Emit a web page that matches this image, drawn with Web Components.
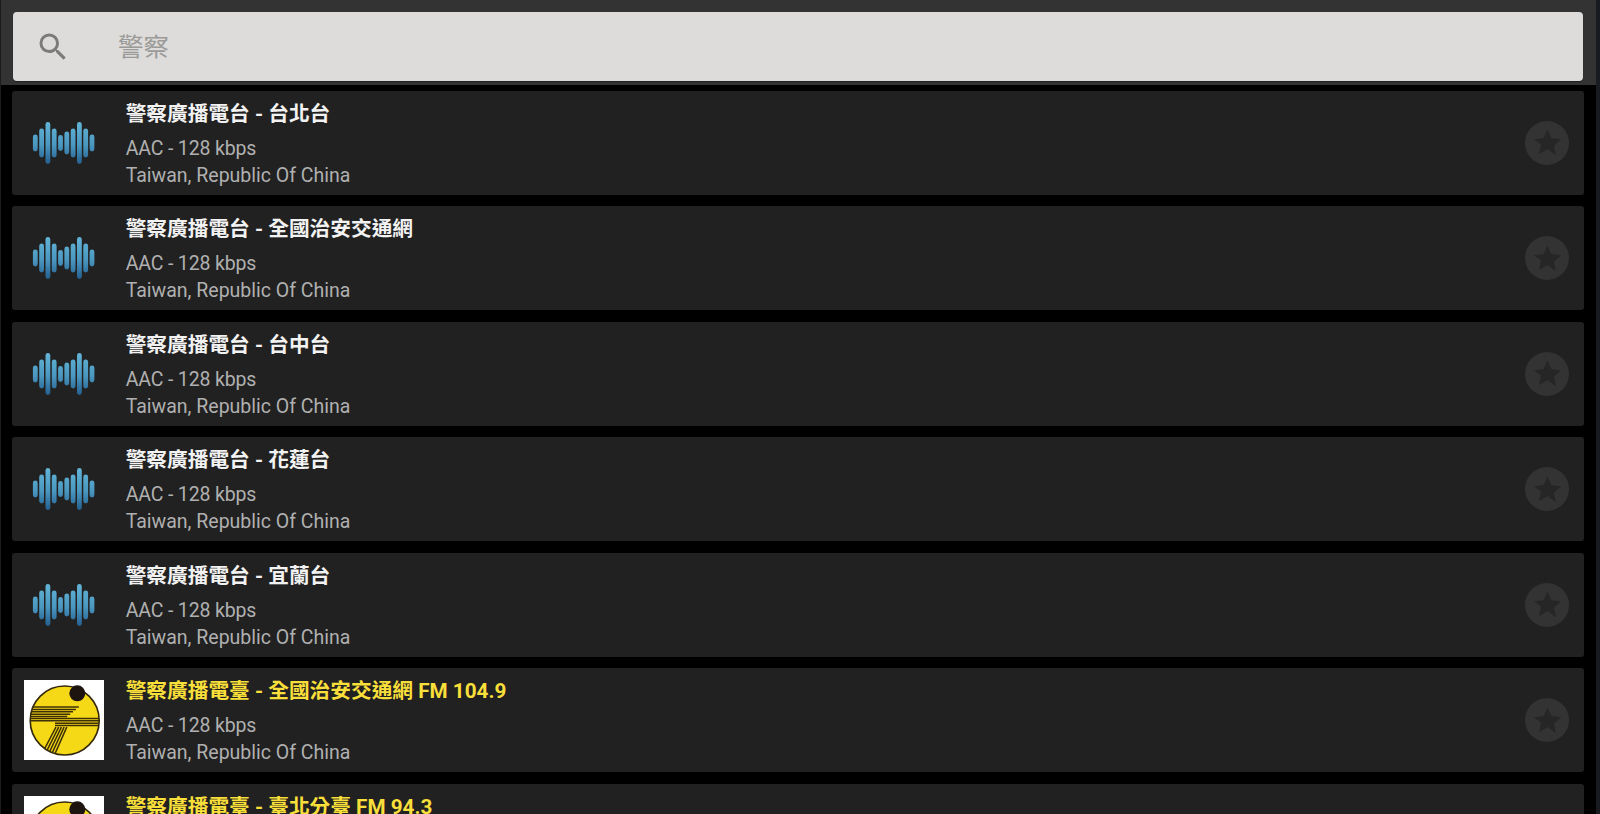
<!DOCTYPE html>
<html><head><meta charset="utf-8">
<style>html,body{margin:0;height:100%;background:#000;overflow:hidden}</style>
</head><body>
<radio-app>
<search-bar placeholder="警察"></search-bar>
<station-row kind="wave" title-text="警察廣播電台 - 台北台"></station-row>
<station-row kind="wave" title-text="警察廣播電台 - 全國治安交通網"></station-row>
<station-row kind="wave" title-text="警察廣播電台 - 台中台"></station-row>
<station-row kind="wave" title-text="警察廣播電台 - 花蓮台"></station-row>
<station-row kind="wave" title-text="警察廣播電台 - 宜蘭台"></station-row>
<station-row kind="logo" title-text="警察廣播電臺 - 全國治安交通網 FM 104.9"></station-row>
<station-row kind="logo" title-text="警察廣播電臺 - 臺北分臺 FM 94.3"></station-row>
</radio-app>
<script>
const FONT='Roboto,"Noto Sans CJK TC",sans-serif';
class RadioApp extends HTMLElement{constructor(){super();this.attachShadow({mode:'open'}).innerHTML=`<style>
:host{display:flex;height:814px;overflow:hidden;background:#000;font-family:${FONT}}
.main{flex:1;min-width:0;display:flex;flex-direction:column}
.edge{width:4px;flex:none;background:#1a1a21}
.ledge{width:1px;flex:none;background:#1c1c1c}
.list{display:flex;flex-direction:column;gap:11.5px;padding:5.8px 12px 0 11.3px}
</style><div class="ledge"></div><div class="main"><slot name="top"></slot><div class="list"><slot></slot></div></div><div class="edge"></div>`;}
connectedCallback(){const s=this.querySelector('search-bar');if(s)s.slot='top';}}
class SearchBar extends HTMLElement{constructor(){super();this.attachShadow({mode:'open'}).innerHTML=`<style>
:host{display:block;background:#333;padding:12px 13px 4px 12px;height:69px;flex:none}
.box{display:flex;align-items:center;height:69px;background:#dddcda;border-radius:4px;box-shadow:0 1px 1px rgba(0,0,0,.4)}
svg{width:36px;height:36px;margin-left:22px;flex:none}
span{margin-left:47px;font:25.500px ${FONT};color:#9a9a98;position:relative;top:-2px}
</style><div class="box"><svg viewBox="0 0 24 24"><path fill="#7b7b79" d="M15.5 14h-.79l-.28-.27A6.47 6.47 0 0 0 16 9.5 6.5 6.5 0 1 0 9.5 16c1.61 0 3.09-.59 4.23-1.57l.27.28v.79l5 4.99L20.49 19l-4.99-5zm-6 0C7.01 14 5 11.99 5 9.5S7.01 5 9.5 5 14 7.01 14 9.5 11.99 14 9.5 14z"/></svg><span></span></div>`;
this.shadowRoot.querySelector('span').textContent=this.getAttribute('placeholder');}}
function waveSvg(){
 const hts=[17,29,42,29,16,23,29,42,29,17];
 let r='';hts.forEach((h,i)=>{const cx=11.3+i*6.3;r+=`<rect x="${cx-2.4}" y="${40-h/2}" width="4.8" height="${h}" rx="2.4" fill="url(#g)"/>`});
 return `<svg viewBox="0 0 80 80" width="80" height="80"><defs><linearGradient id="g" gradientUnits="userSpaceOnUse" x1="0" y1="19" x2="0" y2="61"><stop offset="0" stop-color="#62b4d6"/><stop offset=".55" stop-color="#4a97c0"/><stop offset="1" stop-color="#245f90"/></linearGradient></defs>${r}</svg>`;}
function logoSvg(){
 let l='';const c='#3d3008';
 for(let y=27;y<=36.6;y+=2.4){const x2=56-(y-26)*1.2;const x1=40.700-Math.sqrt(35*35-(y-40.500)*(y-40.500))+.5;l+=`<path d="M${x1.toFixed(1)} ${y}H${x2.toFixed(1)}" stroke="${c}" stroke-width="1.500"/>`;}
 for(let y=38.400;y<=47;y+=2.400){const x2=40.700+Math.sqrt(35*35-(y-40.500)*(y-40.500))-.5;const x1=y<41?6:31;l+=`<path d="M${x1} ${y}H${x2.toFixed(1)}" stroke="${c}" stroke-width="1.500"/>`;}
 for(let i=0;i<5;i++){const x=32+i*2.700;l+=`<path d="M${x} 47L${(x-11.500).toFixed(1)} ${69+i}" stroke="${c}" stroke-width="1.600"/>`;}
 return `<svg viewBox="0 0 80 80" width="80" height="80"><rect width="80" height="80" fill="#fff"/><circle cx="40.700" cy="40.500" r="34.500" fill="#f5d916" stroke="#33290a" stroke-width="1.600"/>${l}<circle cx="53.300" cy="13.300" r="8" fill="#1d1410"/></svg>`;}
class StationRow extends HTMLElement{constructor(){super();const yellow=this.getAttribute('kind')==='logo';
this.attachShadow({mode:'open'}).innerHTML=`<style>
:host{display:flex;flex:none;height:104px;background:#212121;border-radius:3px;position:relative;align-items:center}
.art{width:80px;height:80px;margin-left:11.700px;flex:none}
svg{display:block}
.txt{margin-left:21.700px;flex:1;min-width:0;align-self:flex-start;display:flex;flex-direction:column}
.t{font:700 20.700px/28px ${FONT};color:${yellow?'#f9df3a':'#f2f2f2'};margin-top:9px;white-space:nowrap}
.s{font:400 19.500px/27px ${FONT};color:#b0b0b0;white-space:nowrap}
.s.a{margin-top:7px;letter-spacing:-.15px}
.star{width:44px;height:44px;border-radius:50%;background:#333;margin-right:15px;flex:none;display:flex;align-items:center;justify-content:center}
.star svg{width:33px;height:33px}
</style><div class="art">${yellow?logoSvg():waveSvg()}</div>
<div class="txt"><div class="t"></div><div class="s a">AAC - 128 kbps</div><div class="s">Taiwan, Republic Of China</div></div>
<div class="star"><svg viewBox="0 0 24 24"><path fill="#262626" d="M12 2.500l2.900 6.400 7 .8-5.200 4.700 1.400 6.900L12 16.800l-6.100 3.500 1.400-6.900L2.100 9.700l7-.8z"/></svg></div>`;
this.shadowRoot.querySelector('.t').textContent=this.getAttribute('title-text');}}
customElements.define('radio-app',RadioApp);
customElements.define('search-bar',SearchBar);
customElements.define('station-row',StationRow);
</script></body></html>
